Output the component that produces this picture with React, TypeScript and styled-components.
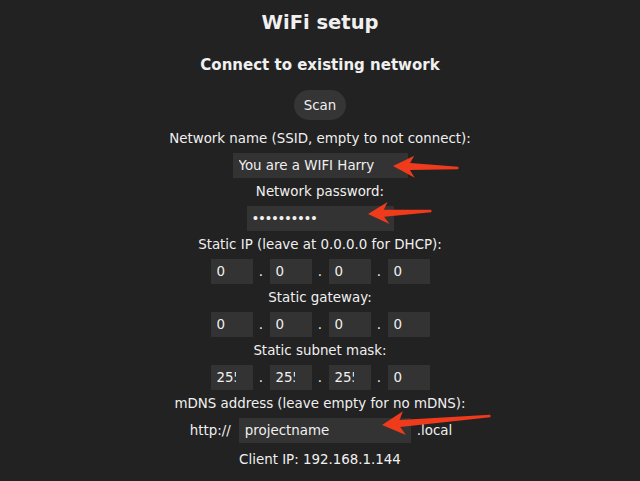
import React from 'react'
import styled, {createGlobalStyle} from 'styled-components'

const GlobalStyle = createGlobalStyle`
  html, body {
    margin: 0;
    padding: 0;
    background-color: #222;
  }
  body {
    font-family: "DejaVu Sans", Verdana, sans-serif;
    color: #f0f0f0;
  }
`

const PageStl = styled.div`
  position: relative;
  width: 640px;
  height: 481px;
  overflow: hidden;
  padding-top: 11px;
  box-sizing: border-box;
  display: flex;
  flex-direction: column;
  align-items: center;
  background-color: #222;
`

const TitleStl = styled.h1`
  margin: 0;
  font-size: 19.5px;
  line-height: 24px;
  font-weight: bold;
`

const SubtitleStl = styled.h2`
  margin: 20px 0 0;
  font-size: 15px;
  line-height: 20px;
  font-weight: bold;
`

const ScanButtonStl = styled.button`
  margin: 15px 0 11px;
  height: 30px;
  padding: 0 10px;
  border: none;
  border-radius: 15px;
  background-color: #353535;
  color: #f0f0f0;
  font-family: inherit;
  font-size: 13.4px;
`

const LabelStl = styled.div`
  font-size: 13.4px;
  line-height: 16px;
  margin-bottom: 6px;
`

const RowStl = styled.div`
  display: flex;
  align-items: center;
  justify-content: center;
  height: 25px;
  margin-bottom: 6px;
`

const TextInputStl = styled.input<{w: number; masked?: boolean}>`
  box-sizing: border-box;
  width: ${({w}) => w}px;
  height: 25px;
  padding: 0 6px;
  border: none;
  outline: none;
  background-color: #333;
  color: #f0f0f0;
  font-family: inherit;
  font-size: 13.4px;
  ${({masked}) => masked && `
    letter-spacing: -1.4px;
    padding-left: 5px;
  `}
`

const OctetStl = styled.input`
  box-sizing: content-box;
  width: 19px;
  height: 25px;
  padding: 0 17px 0 6px;
  border: none;
  outline: none;
  background-color: #333;
  color: #f0f0f0;
  font-family: inherit;
  font-size: 13.4px;
`

const DotStl = styled.span`
  width: 17px;
  text-align: center;
  font-size: 13.4px;
`

const AffixStl = styled.span<{gap: number}>`
  font-size: 13.4px;
  margin: 0 ${({gap}) => gap}px;
`

const ClientIpStl = styled.div`
  margin-top: 3px;
  font-size: 13.4px;
  line-height: 16px;
`

const OverlayStl = styled.svg`
  position: absolute;
  left: 0;
  top: 0;
  pointer-events: none;
`

interface IArrow {
    tip: [number, number]
    tail: [number, number]
    headLen: number
    headHalf: number
}

const arrows: Array<IArrow> = [
    {tip: [393, 166], tail: [458, 168], headLen: 21, headHalf: 11},
    {tip: [368, 214], tail: [431, 211], headLen: 20, headHalf: 11},
    {tip: [382, 425], tail: [490, 416], headLen: 22, headHalf: 12},
]

const arrowPath = ({tip, tail, headLen, headHalf}: IArrow) => {
    const dx = tail[0] - tip[0]
    const dy = tail[1] - tip[1]
    const len = Math.hypot(dx, dy)
    const d = [dx / len, dy / len]
    const n = [-d[1], d[0]]
    const at = (along: number, side: number) =>
        `${(tip[0] + d[0] * along + n[0] * side).toFixed(1)},${(tip[1] + d[1] * along + n[1] * side).toFixed(1)}`
    return `M${at(0, 0)} L${at(headLen, -headHalf)} L${at(headLen - 4, -3.5)} L${at(len, -1.2)} ` +
        `Q${at(len + 1.5, 0)} ${at(len, 1.2)} L${at(headLen - 4, 3.5)} L${at(headLen + 1, headHalf)} Z`
}

const IpRow = ({values}: {values: Array<string>}) => (
    <RowStl>
        {values.map((v, i) => (
            <React.Fragment key={i}>
                {i > 0 && <DotStl>.</DotStl>}
                <OctetStl value={v} readOnly/>
            </React.Fragment>
        ))}
    </RowStl>
)

export default function App() {
    return (
        <PageStl>
            <GlobalStyle/>
            <TitleStl>WiFi setup</TitleStl>
            <SubtitleStl>Connect to existing network</SubtitleStl>
            <ScanButtonStl>Scan</ScanButtonStl>

            <LabelStl>Network name (SSID, empty to not connect):</LabelStl>
            <RowStl>
                <TextInputStl w={175} value="You are a WIFI Harry" readOnly/>
            </RowStl>

            <LabelStl>Network password:</LabelStl>
            <RowStl>
                <TextInputStl w={147} masked type="password" value="abcdefghij" readOnly/>
            </RowStl>

            <LabelStl>Static IP (leave at 0.0.0.0 for DHCP):</LabelStl>
            <IpRow values={['0', '0', '0', '0']}/>

            <LabelStl>Static gateway:</LabelStl>
            <IpRow values={['0', '0', '0', '0']}/>

            <LabelStl>Static subnet mask:</LabelStl>
            <IpRow values={['255', '255', '255', '0']}/>

            <LabelStl>mDNS address (leave empty for no mDNS):</LabelStl>
            <RowStl>
                <AffixStl gap={8}>http://</AffixStl>
                <TextInputStl w={172} value="projectname" readOnly/>
                <AffixStl gap={6}>.local</AffixStl>
            </RowStl>

            <ClientIpStl>Client IP: 192.168.1.144</ClientIpStl>

            <OverlayStl width={640} height={481} viewBox="0 0 640 481">
                {arrows.map((a, i) => (
                    <path key={i} d={arrowPath(a)} fill="#f03a1c"/>
                ))}
            </OverlayStl>
        </PageStl>
    )
}
